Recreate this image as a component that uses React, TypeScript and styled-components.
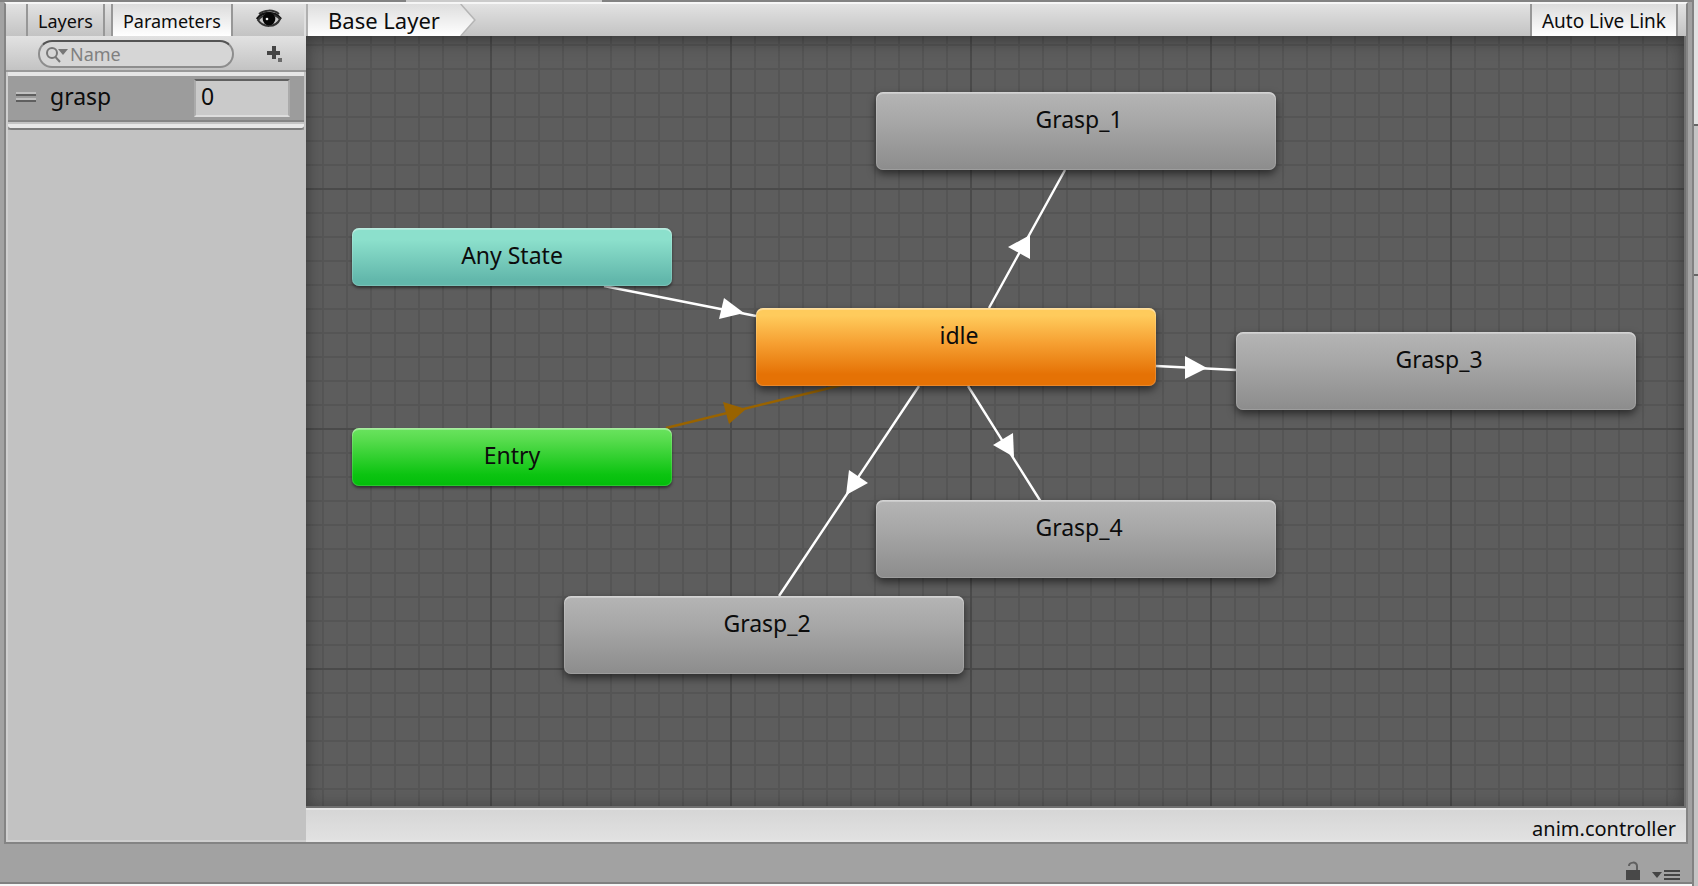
import React from 'react';
import styled, { createGlobalStyle } from 'styled-components';

const Global = createGlobalStyle`
  * { box-sizing: border-box; }
  html, body, #root { height: 100%; }
  body { margin: 0; background: #a2a2a2; font-family: "Noto Sans", sans-serif; color: #0c0c0c; overflow: hidden; }
  button, input { font-family: inherit; color: inherit; margin: 0; }
`;

const Screen = styled.div`
  display: flex;
  min-height: 100vh;
  background: #a2a2a2;
`;

const MainColumn = styled.div`
  flex: 1;
  min-width: 0;
  display: flex;
  flex-direction: column;
  padding-left: 4px;
  border-bottom: 2px solid #f7f7f7;
`;

const TabEdge = styled.div`
  flex: none;
  height: 2px;
  margin-left: -4px;
  padding-left: 406px;
  background: #828282;
`;

const TabGap = styled.div`
  width: 196px;
  height: 2px;
  background: #cbcbcb;
`;

const Window = styled.main`
  flex: 1;
  min-height: 0;
  display: flex;
  margin-right: 4px;
  border: 2px solid #848484;
  border-top: 2px solid #f6f6f6;
`;

const toolbarFill = 'linear-gradient(#e2e2e2, #c3c3c3)';

const Sidebar = styled.aside`
  flex: none;
  width: 300px;
  display: flex;
  flex-direction: column;
  background: #c2c2c2;
  box-shadow: inset 2px -2px 0 #cfcfcf;
`;

const Toolbar = styled.div`
  flex: none;
  height: 32px;
  display: flex;
  align-items: stretch;
  background: ${toolbarFill};
`;

const TabButton = styled.button<{ $active?: boolean; $size?: number }>`
  border: 2px solid #979797;
  border-width: 0 2px;
  padding: 2px 10px 0;
  font-size: ${p => p.$size ?? 18}px;
  line-height: 30px;
  white-space: nowrap;
  background: ${p => (p.$active ? 'linear-gradient(#dcdcdc, #ffffff)' : 'transparent')};
`;

const SideTabs = styled(Toolbar)`
  padding-left: 20px;
  gap: 6px;
  border-right: 2px solid #e0e0e0;
`;

const IconButton = styled.button`
  border: 0;
  padding: 0;
  background: none;
  display: flex;
  align-items: center;
  justify-content: center;
`;

const EyeButton = styled(IconButton)`
  margin-left: 16px;
  width: 28px;
`;

const SearchRow = styled.div`
  flex: none;
  display: flex;
  align-items: center;
  height: 36px;
  padding: 2px 22px 0 32px;
  justify-content: space-between;
  background: ${toolbarFill};
  border-bottom: 2px solid #999;
`;

const SearchBox = styled.label`
  display: flex;
  align-items: center;
  width: 196px;
  height: 28px;
  padding-left: 6px;
  border: 2px solid #8d8d8d;
  border-top-color: #545454;
  border-radius: 14px;
  background: #d6d6d6;
`;

const SearchInput = styled.input`
  flex: 1;
  min-width: 0;
  border: 0;
  outline: 0;
  padding: 0;
  background: none;
  font-size: 18px;
  line-height: 22px;
  &::placeholder { color: #808080; opacity: 1; }
`;

const ParameterList = styled.div`
  margin: 0 2px;
  background: #9c9c9c;
  border-top: 4px solid #e6e6e6;
`;

const ParameterRow = styled.div`
  display: flex;
  align-items: center;
  height: 46px;
  padding: 0 14px 0 8px;
  border-bottom: 2px solid #858585;
`;

const ListFoot = styled.div`
  height: 8px;
  background: #e8e8e8;
  border: 2px solid #7d7d7d;
  border-top-color: #c4c4c4;
  border-width: 2px 0 2px 0;
  border-radius: 0 0 4px 4px;
`;

const DragHandle = styled.div`
  width: 20px;
  height: 8px;
  border: 2px solid #c0c0c0;
  border-width: 2px 0;
  box-shadow: 0 2px 0 #5f5f5f, inset 0 2px 0 #5f5f5f;
  margin: 0 14px 4px 0;
`;

const ParameterName = styled.label`
  flex: 1;
  padding-bottom: 4px;
  font-size: 23px;
  line-height: 30px;
`;

const ValueInput = styled.input`
  width: 96px;
  height: 38px;
  border: 2px solid #ababab;
  border-top-color: #606060;
  border-bottom-color: #ddd;
  padding: 0 5px 5px;
  background: #cacaca;
  font-size: 23px;
  outline: 0;
`;

const Editor = styled.section`
  flex: 1;
  min-width: 0;
  display: flex;
  flex-direction: column;
`;

const EditorBar = styled(Toolbar)`
  justify-content: space-between;
  padding-right: 8px;
  border-left: 2px solid #b0b0b0;
`;

const Crumb = styled.button`
  position: relative;
  border: 0;
  padding: 0 36px 0 20px;
  background: none;
  font-size: 22px;
  line-height: 28px;
  white-space: nowrap;
`;

const CrumbShape = styled.svg`
  position: absolute;
  inset: 0;
  width: 100%;
  height: 100%;
`;

const CrumbText = styled.span`
  position: relative;
`;

const Canvas = styled.div`
  position: relative;
  flex: 1;
  min-height: 0;
  overflow: hidden;
  background-color: #5d5d5d;
  background-image:
    linear-gradient(90deg, #4a4a4a 2px, transparent 2px),
    linear-gradient(#4a4a4a 2px, transparent 2px),
    linear-gradient(90deg, #555 2px, transparent 2px),
    linear-gradient(#555 2px, transparent 2px);
  background-size: 240px 240px, 240px 240px, 24px 24px, 24px 24px;
  background-position: 184px 152px, 184px 152px, 16px 8px, 16px 8px;
  border: 2px solid #707070;
  border-width: 0 2px 2px 0;
  &::after {
    content: "";
    position: absolute;
    inset: 0;
    pointer-events: none;
    box-shadow: inset 0 8px 20px -4px rgba(0, 0, 0, 0.3), inset 0 0 16px rgba(0, 0, 0, 0.2);
  }
`;

const Links = styled.svg`
  position: absolute;
  left: 0;
  top: 0;
  width: 1378px;
  height: 770px;
`;

const fills = {
  gray: 'linear-gradient(#b5b5b5, #a6a6a6 40%, #8c8c8c)',
  teal: 'linear-gradient(#8ce0cc 20%, #62b7ab 90%)',
  green: 'linear-gradient(#6be35f, #58dc4e 20%, #0cc411 80%, #02bd0a)',
  orange: 'linear-gradient(#ffcb5c 10%, #f6a032 45%, #e57205 85%)',
};

const StateNode = styled.button<{ $x: number; $y: number; $fill: keyof typeof fills; $small?: boolean }>`
  position: absolute;
  left: ${p => p.$x}px;
  top: ${p => p.$y}px;
  width: ${p => (p.$small ? 320 : 400)}px;
  height: ${p => (p.$small ? 58 : 78)}px;
  display: flex;
  justify-content: center;
  align-items: flex-start;
  border: 0;
  padding: ${p => (p.$small ? '12px 0 0' : '12px 0 0 6px')};
  border-radius: 7px;
  background: ${p => fills[p.$fill]};
  box-shadow: inset 0 2px 0 rgba(255, 255, 255, 0.3), inset 0 0 0 1px rgba(255, 255, 255, 0.15),
    ${p => (p.$small ? '0 2px 3px rgba(0, 0, 0, 0.5)' : '0 4px 9px rgba(0, 0, 0, 0.55)')};
  font-size: 23px;
  line-height: 30px;
`;

const StatusBar = styled.footer`
  flex: none;
  height: 34px;
  display: flex;
  align-items: center;
  justify-content: flex-end;
  padding: 8px 10px 0 0;
  background: linear-gradient(#d6d6d6, #e1e1e1);
  border: 2px solid #e6e6e6;
  border-width: 2px 0;
  font-size: 20px;
  line-height: 24px;
`;

const DockBar = styled.div`
  flex: none;
  height: 40px;
  display: flex;
  justify-content: flex-end;
  align-items: flex-end;
  gap: 12px;
  padding: 0 12px 2px 0;
  margin-left: -4px;
  border-bottom: 2px solid #808080;
`;

const NextPanel = styled.div`
  flex: none;
  width: 6px;
  display: flex;
  flex-direction: column;
  border-left: 2px solid #828282;
  background: #c4c4c4;
`;

const NextPanelBlock = styled.div<{ $h: number; $c: string }>`
  height: ${p => p.$h}px;
  background: ${p => p.$c};
  border-bottom: 2px solid #666;
`;

type StateItem = { name: string; x: number; y: number; fill: keyof typeof fills; small?: boolean };

const states: StateItem[] = [
  { name: 'Any State', x: 46, y: 192, fill: 'teal', small: true },
  { name: 'Entry', x: 46, y: 392, fill: 'green', small: true },
  { name: 'Grasp_1', x: 570, y: 56, fill: 'gray' },
  { name: 'Grasp_2', x: 258, y: 560, fill: 'gray' },
  { name: 'Grasp_3', x: 930, y: 296, fill: 'gray' },
  { name: 'Grasp_4', x: 570, y: 464, fill: 'gray' },
  { name: 'idle', x: 450, y: 272, fill: 'orange' },
];

export default function App() {
  return (
    <>
      <Global />
      <Screen>
        <MainColumn>
          <TabEdge><TabGap /></TabEdge>
          <Window>
            <Sidebar>
              <SideTabs>
                <TabButton>Layers</TabButton>
                <TabButton $active>Parameters</TabButton>
                <EyeButton aria-label="Toggle parameter visibility">
                  <svg width="26" height="22" viewBox="0 0 26 22">
                    <path d="M3 5C8 1 17 0 23 5" fill="none" stroke="#333" strokeWidth="2" />
                    <path d="M1 10C6 2 19 2 25 10" fill="none" stroke="#111" strokeWidth="2.400" />
                    <path d="M2 11C8 4 18 4 24 10C20 19 7 19 2 11Z" fill="#c8c8c8" stroke="#333" strokeWidth="2" />
                    <circle cx="13" cy="10" r="6.300" fill="#060606" />
                    <circle cx="11" cy="10" r="1.300" fill="#eee" />
                  </svg>
                </EyeButton>
              </SideTabs>
              <SearchRow>
                <SearchBox>
                  <svg width="24" height="20" viewBox="0 0 24 20" fill="none" stroke="#777" aria-hidden="true">
                    <circle cx="6" cy="9" r="5" strokeWidth="2" />
                    <path d="M9.500 13L14 18" strokeWidth="2" />
                    <path d="M12 5H22L17 11Z" fill="#777" stroke="none" />
                  </svg>
                  <SearchInput type="text" placeholder="Name" aria-label="Name" />
                </SearchBox>
                <IconButton aria-label="Add parameter">
                  <svg width="18" height="18" viewBox="0 0 18 18" fill="#454545">
                    <path d="M6 1H10V6H14V10H10V14H6V10H1V6H6Z" />
                    <path d="M12 13H16V17H12Z" fill="#6a6a6a" />
                  </svg>
                </IconButton>
              </SearchRow>
              <ParameterList>
                <ParameterRow>
                  <DragHandle />
                  <ParameterName htmlFor="grasp-value">grasp</ParameterName>
                  <ValueInput id="grasp-value" type="text" defaultValue="0" />
                </ParameterRow>
                <ListFoot />
              </ParameterList>
            </Sidebar>
            <Editor>
              <EditorBar>
                <Crumb>
                  <CrumbShape viewBox="0 0 166 32" preserveAspectRatio="none" aria-hidden="true">
                    <defs>
                      <linearGradient id="crumb" x1="0" y1="0" x2="0" y2="1">
                        <stop offset="0" stopColor="#dedede" />
                        <stop offset="1" stopColor="#ffffff" />
                      </linearGradient>
                    </defs>
                    <path d="M0 0H151L165 16L151 32H0Z" fill="url(#crumb)" />
                    <path d="M151 0L165 16L151 32" fill="none" stroke="#b5b5b5" strokeWidth="1.500" />
                  </CrumbShape>
                  <CrumbText>Base Layer</CrumbText>
                </Crumb>
                <TabButton $active $size={19}>Auto Live Link</TabButton>
              </EditorBar>
              <Canvas>
                <Links viewBox="0 0 1378 770" stroke="#fff" strokeWidth="2.400" fill="#fff" aria-hidden="true">
                  <path d="M298 250L450 280M683 272L759 134M850 330L930 334M613 350L473 560M662 350L735 466" />
                  <path d="M360 392L540 348" stroke="#996300" />
                  <g stroke="none">
                    <path d="M418 262L438 277L413 283Z" />
                    <path d="M702 211L724 199L724 223Z" />
                    <path d="M879 320L901 332L879 343Z" />
                    <path d="M543 434L562 447L540 459Z" />
                    <path d="M687 409L707 397L708 421Z" />
                    <path d="M417 366L440 373L423 388Z" fill="#996300" />
                  </g>
                </Links>
                {states.map(s => (
                  <StateNode key={s.name} $x={s.x} $y={s.y} $fill={s.fill} $small={s.small}>{s.name}</StateNode>
                ))}
              </Canvas>
              <StatusBar>anim.controller</StatusBar>
            </Editor>
          </Window>
          <DockBar>
            <IconButton aria-label="Lock">
              <svg width="14" height="20" viewBox="0 0 14 20">
                <path d="M0 10H14V20H0Z" fill="#484848" />
                <path d="M3 6C3 2 11 1 11 6V10" fill="none" stroke="#606060" strokeWidth="2" />
              </svg>
            </IconButton>
            <IconButton aria-label="Panel menu">
              <svg width="28" height="16" viewBox="0 0 28 16" fill="#444">
                <path d="M0 8H10L5 14Z" />
                <path d="M12 6H28V8H12ZM12 10H28V12H12ZM12 14H28V16H12Z" />
              </svg>
            </IconButton>
          </DockBar>
        </MainColumn>
        <NextPanel>
          <NextPanelBlock $h={126} $c="#e2e2e2" />
          <NextPanelBlock $h={150} $c="#c4c4c4" />
        </NextPanel>
      </Screen>
    </>
  );
}
